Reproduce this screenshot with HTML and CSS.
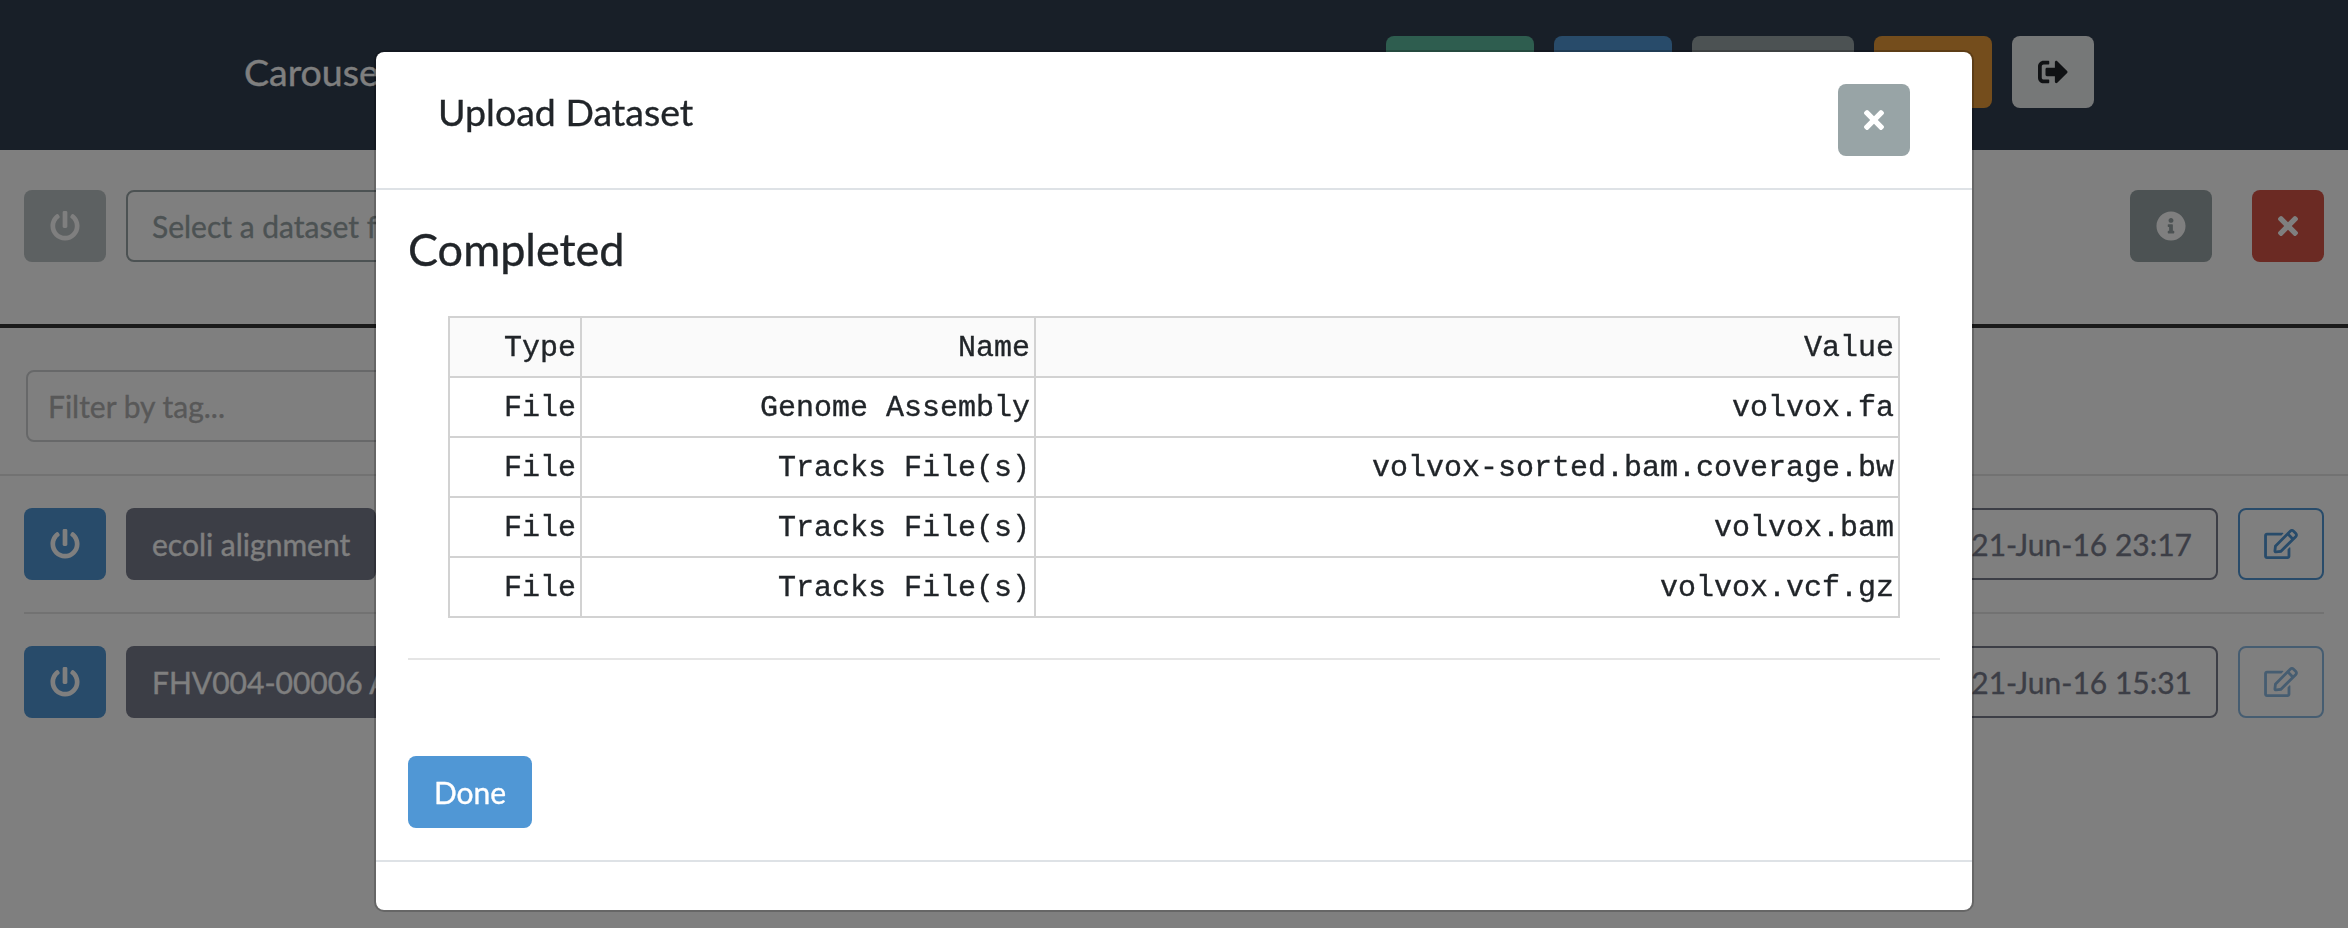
FILE: index.html
```
<!DOCTYPE html>
<html lang="en">
<head>
<meta charset="utf-8">
<title>Carousel</title>
<link rel="stylesheet" href="styles.css">
</head>
<body>
<svg class="defs" width="0" height="0">
  <symbol id="power" viewBox="0 0 512 512"><path d="M400 54.1c63 45 104 118.6 104 201.9 0 136.800-110.800 247.700-247.500 248C120 504.300 8.200 393 8 256.400 7.900 173.100 48.900 99.300 111.800 54.200c11.700-8.300 28-4.800 35 7.700L162.600 90c5.900 10.500 3.100 23.800-6.600 31-41.500 30.800-68 79.600-68 134.900-.1 92.300 74.500 168.100 168 168.100 91.600 0 168.600-74.200 168-169.100-.3-51.800-24.700-101.800-68.100-134-9.700-7.200-12.400-20.500-6.500-30.900l15.800-28.100c7-12.400 23.200-16.100 34.800-7.800zM296 264V24c0-13.300-10.700-24-24-24h-32c-13.300 0-24 10.700-24 24v240c0 13.300 10.700 24 24 24h32c13.300 0 24-10.700 24-24z"/></symbol>
  <symbol id="times" viewBox="0 0 352 512"><path d="M242.720 256l100.070-100.070c12.280-12.280 12.280-32.190 0-44.480l-22.240-22.240c-12.280-12.280-32.190-12.280-44.480 0L176 189.280 75.930 89.210c-12.280-12.280-32.190-12.280-44.480 0L9.210 111.450c-12.280 12.280-12.280 32.190 0 44.480L109.280 256 9.210 356.070c-12.280 12.280-12.280 32.190 0 44.480l22.240 22.240c12.280 12.280 32.200 12.280 44.480 0L176 322.720l100.070 100.070c12.280 12.280 32.200 12.280 44.480 0l22.240-22.240c12.280-12.280 12.280-32.190 0-44.480L242.720 256z"/></symbol>
  <symbol id="info" viewBox="0 0 512 512"><path d="M256 8C119.043 8 8 119.083 8 256c0 136.997 111.043 248 248 248s248-111.003 248-248C504 119.083 392.957 8 256 8zm0 110c23.196 0 42 18.804 42 42s-18.804 42-42 42-42-18.804-42-42 18.804-42 42-42zm56 254c0 6.627-5.373 12-12 12h-88c-6.627 0-12-5.373-12-12v-24c0-6.627 5.373-12 12-12h12v-64h-12c-6.627 0-12-5.373-12-12v-24c0-6.627 5.373-12 12-12h64c6.627 0 12 5.373 12 12v100h12c6.627 0 12 5.373 12 12v24z"/></symbol>
  <symbol id="edit" viewBox="0 0 576 512"><path d="M402.300 344.900l32-32c5-5 13.700-1.500 13.700 5.700V464c0 26.500-21.500 48-48 48H48c-26.500 0-48-21.500-48-48V112c0-26.500 21.500-48 48-48h273.500c7.100 0 10.700 8.600 5.700 13.700l-32 32c-1.500 1.500-3.500 2.300-5.700 2.300H48v352h352V350.500c0-2.100.8-4.100 2.300-5.600zm156.600-201.800L296.300 405.700l-90.400 10c-26.200 2.900-48.500-19.200-45.600-45.600l10-90.400L432.900 17.100c22.900-22.900 59.900-22.900 82.700 0l43.200 43.200c22.900 22.900 22.900 60 .1 82.800zM460.100 174L402 115.900 216.200 301.800l-7.300 65.300 65.300-7.300L460.100 174zm64.800-79.700l-43.200-43.200c-4.100-4.100-10.800-4.100-14.800 0L436 82l58.100 58.100 30.900-30.900c4-4.200 4-10.800-.1-14.900z"/></symbol>
  <symbol id="signout" viewBox="0 0 512 512"><path d="M497 273L329 441c-15 15-41 4.500-41-17v-96H152c-13.300 0-24-10.700-24-24v-96c0-13.300 10.700-24 24-24h136V88c0-21.400 25.900-32 41-17l168 168c9.300 9.400 9.300 24.600 0 34zM192 436v-40c0-6.600-5.400-12-12-12H96c-17.700 0-32-14.300-32-32V160c0-17.700 14.300-32 32-32h84c6.600 0 12-5.400 12-12V76c0-6.600-5.400-12-12-12H96c-53 0-96 43-96 96v192c0 53 43 96 96 96h84c6.600 0 12-5.400 12-12z"/></symbol>
</svg>

<header class="navbar">
  <span class="brand">Carouse</span>
  <nav class="nav-actions">
    <button class="btn green"></button>
    <button class="btn blue nav-medium"></button>
    <button class="btn gray nav-wide"></button>
    <button class="btn orange nav-medium"></button>
    <button class="btn light icon-btn"><svg class="icon"><use href="#signout"/></svg></button>
  </nav>
</header>

<section class="toolbar">
  <button class="btn gray icon-btn disabled"><svg class="icon"><use href="#power"/></svg></button>
  <div class="btn select">Select a dataset fr</div>
  <button class="btn gray icon-btn info-btn"><svg class="icon"><use href="#info"/></svg></button>
  <button class="btn red close-btn"><svg class="icon narrow"><use href="#times"/></svg></button>
</section>

<section class="filter"><div class="filter-input">Filter by tag...</div></section>

<main class="datasets">
  <div class="dataset">
    <button class="btn blue icon-btn"><svg class="icon"><use href="#power"/></svg></button>
    <span class="btn dark">ecoli alignment</span>
    <span class="btn date">21-Jun-16 23:17</span>
    <button class="btn edit"><svg class="icon wide"><use href="#edit"/></svg></button>
  </div>
  <div class="dataset">
    <button class="btn blue icon-btn"><svg class="icon"><use href="#power"/></svg></button>
    <span class="btn dark">FHV004-00006 A</span>
    <span class="btn date">21-Jun-16 15:31</span>
    <button class="btn edit disabled"><svg class="icon wide"><use href="#edit"/></svg></button>
  </div>
</main>

<div class="backdrop">
  <div class="modal">
    <div class="modal-header">
      <h5 class="modal-title">Upload Dataset</h5>
      <button class="btn gray close-btn"><svg class="icon narrow"><use href="#times"/></svg></button>
    </div>
    <div class="modal-body">
      <h4 class="status">Completed</h4>
      <table class="files">
        <colgroup><col class="col-type"><col class="col-name"><col></colgroup>
        <thead><tr><th>Type</th><th>Name</th><th>Value</th></tr></thead>
        <tbody>
          <tr><td>File</td><td>Genome Assembly</td><td>volvox.fa</td></tr>
          <tr><td>File</td><td>Tracks File(s)</td><td>volvox-sorted.bam.coverage.bw</td></tr>
          <tr><td>File</td><td>Tracks File(s)</td><td>volvox.bam</td></tr>
          <tr><td>File</td><td>Tracks File(s)</td><td>volvox.vcf.gz</td></tr>
        </tbody>
      </table>
      <hr class="rule">
      <button class="btn blue done">Done</button>
    </div>
    <div class="modal-footer"></div>
  </div>
</div>
</body>
</html>
```

FILE: styles.css
```
* { box-sizing: border-box; }
html, body { height: 100%; }
body {
  margin: 0;
  overflow: hidden;
  background: #fff;
  color: #212529;
  font: 30px/45px Lato, sans-serif;
  -webkit-text-stroke: .35px currentColor;
}
.defs { position: absolute; }

.btn {
  display: flex;
  align-items: center;
  justify-content: center;
  flex: none;
  height: 72px;
  padding: 0 24px;
  border: 2px solid transparent;
  border-radius: 8px;
  background: transparent;
  color: #fff;
  font: inherit;
  white-space: nowrap;
}
.icon { display: block; width: 30px; height: 30px; fill: currentColor; }
.icon.narrow { width: 21px; }
.icon.wide { width: 34px; }
.icon-btn { width: 82px; }
.close-btn { width: 72px; }
.disabled { opacity: .65; }
.green { background: #5cba9e; width: 148px; }
.blue { background: #5097d5; }
.gray { background: #98a4a6; }
.orange { background: #e89a38; }
.red { background: #d65446; }
.light { background: #edf0f0; color: #212529; }
.dark { background: #797c8c; }

.navbar {
  display: flex;
  align-items: center;
  justify-content: space-between;
  height: 150px;
  padding: 0 254px 6px 244px;
  background: #303e50;
}
.brand { padding-bottom: 2px; color: #fff; font-size: 37.5px; }
.nav-actions { display: flex; gap: 20px; }
.nav-medium { width: 118px; }
.nav-wide { width: 162px; }

.toolbar {
  display: flex;
  gap: 20px;
  height: 178px;
  padding: 40px 24px 0;
  border-bottom: 4px solid #343434;
}
.select { width: 800px; justify-content: flex-start; border-color: #98a4a6; color: #98a4a6; }
.info-btn { margin: 0 20px 0 auto; }

.filter { height: 148px; padding: 42px 26px 0; border-bottom: 2px solid #e5e5e5; }
.filter-input {
  width: 800px;
  height: 72px;
  padding: 12px 20px;
  border: 2px solid #ced0d2;
  border-radius: 8px;
  color: #b0b0b0;
}

.datasets { padding: 0 24px; }
.dataset { display: flex; gap: 20px; padding: 32px 0; }
.dataset + .dataset { border-top: 2px solid #e5e5e5; }
.date { margin-left: auto; border-color: #797c8c; color: #797c8c; }
.edit { width: 86px; border-color: #5097d5; color: #5097d5; }

.backdrop {
  position: fixed;
  inset: 0;
  display: flex;
  align-items: flex-start;
  justify-content: center;
  padding-top: 50px;
  background: rgba(0, 0, 0, .5);
}
.modal {
  width: 1600px;
  height: 862px;
  border: 2px solid rgba(0, 0, 0, .2);
  border-radius: 10px;
  background: #fff;
  background-clip: padding-box;
}
.modal-header {
  display: flex;
  justify-content: space-between;
  height: 138px;
  padding: 32px 62px;
  border-bottom: 2px solid #dee2e6;
}
.modal-title { margin: 0; font-size: 37.5px; font-weight: 400; line-height: 56px; }
.modal-body { height: 670px; padding: 32px; }
.status { margin: 0 0 40px; font-size: 45px; font-weight: 400; line-height: 54px; }
.files {
  width: 1452px;
  margin-left: 40px;
  table-layout: fixed;
  border-collapse: collapse;
  font: 30px/45px "Liberation Mono", monospace;
}
.col-type { width: 132px; }
.col-name { width: 454px; }
.files th, .files td {
  height: 60px;
  padding: 2px 4px 0;
  border: 2px solid #d2d2d2;
  font-weight: 400;
  text-align: right;
}
.files th { background: #fafafa; }
.rule { height: 2px; margin: 40px 0 96px; border: 0; background: #e5e5e5; }
.done { width: 124px; }
.modal-footer { border-top: 2px solid #dee2e6; }
```
